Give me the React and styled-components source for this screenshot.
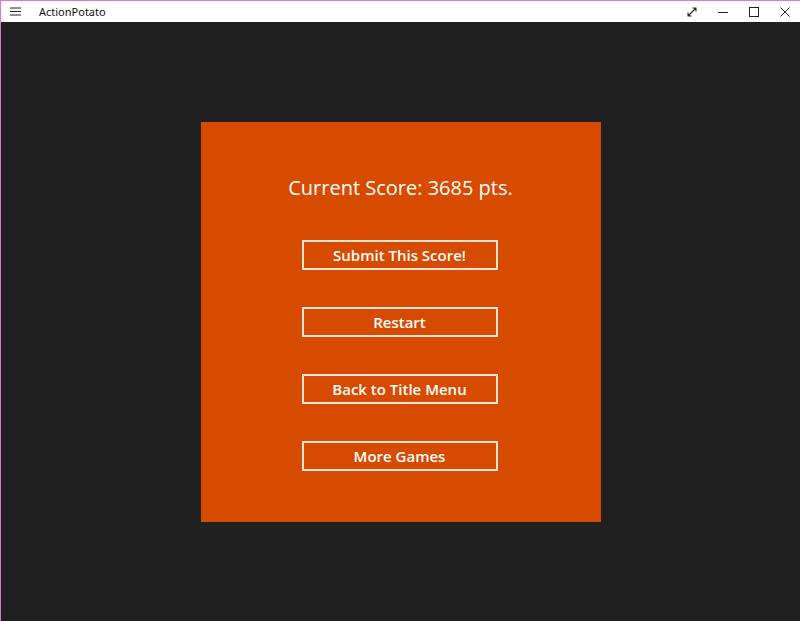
import React from "react";
import styled, { createGlobalStyle } from "styled-components";

const GlobalStyle = createGlobalStyle`
  html, body {
    margin: 0;
    padding: 0;
    background: #202020;
  }
  body {
    font-family: "Open Sans", "Noto Sans", sans-serif;
  }
`;

const Window = styled.div`
  width: 800px;
  height: 621px;
  box-sizing: border-box;
  border-left: 1px solid #e572d8;
  border-top: 1px solid #e572d8;
  display: flex;
  flex-direction: column;
  overflow: hidden;
`;

const TitleBar = styled.div`
  height: 21px;
  flex: 0 0 21px;
  background: #ffffff;
  display: flex;
  align-items: center;
`;

const MenuButton = styled.div`
  width: 29px;
  display: flex;
  justify-content: center;
`;

const AppName = styled.span`
  margin-left: 9px;
  font-family: "Noto Sans", "Open Sans", sans-serif;
  font-size: 11px;
  color: #111;
`;

const Controls = styled.div`
  margin-left: auto;
  display: flex;
  height: 100%;
`;

const Control = styled.div`
  width: 31px;
  height: 100%;
  display: flex;
  align-items: center;
  justify-content: center;
`;

const Content = styled.main`
  flex: 1;
  background: #202020;
  display: flex;
  align-items: center;
  justify-content: center;
`;

const Panel = styled.section`
  width: 400px;
  height: 400px;
  background: #d64b00;
  display: flex;
  flex-direction: column;
  align-items: center;
  padding-top: 51px;
  box-sizing: border-box;
`;

const Score = styled.h1`
  margin: 0 0 38px;
  font-weight: 400;
  font-size: 20px;
  line-height: 29px;
  color: #fff;
`;

const Menu = styled.div`
  display: flex;
  flex-direction: column;
  gap: 37px;
  margin-right: 2px;
`;

const MenuItem = styled.button`
  width: 196px;
  height: 30px;
  background: transparent;
  border: 2px solid #f6e4d8;
  color: #fff;
  font-family: "Open Sans", "Noto Sans", sans-serif;
  font-weight: 600;
  font-size: 15px;
  padding: 0;
  cursor: pointer;
`;

const items = ["Submit This Score!", "Restart", "Back to Title Menu", "More Games"];

export default function App() {
  return (
    <>
      <GlobalStyle />
      <Window>
        <TitleBar>
          <MenuButton>
            <svg width="11" height="9" viewBox="0 0 11 9">
              <path d="M0 1h11M0 4.5h11M0 8h11" stroke="#222" strokeWidth="1" />
            </svg>
          </MenuButton>
          <AppName>ActionPotato</AppName>
          <Controls>
            <Control>
              <svg width="10" height="10" viewBox="0 0 10 10">
                <path d="M1 9L9 1M5.5 1H9v3.5M1 5.5V9h3.5" stroke="#222" strokeWidth="1.1" fill="none" />
              </svg>
            </Control>
            <Control>
              <svg width="10" height="10" viewBox="0 0 10 10">
                <path d="M0 5.5h10" stroke="#222" strokeWidth="1" />
              </svg>
            </Control>
            <Control>
              <svg width="10" height="10" viewBox="0 0 10 10">
                <rect x="0.5" y="0.5" width="9" height="9" stroke="#222" strokeWidth="1" fill="none" />
              </svg>
            </Control>
            <Control>
              <svg width="10" height="10" viewBox="0 0 10 10">
                <path d="M0.5 0.5l9 9M9.5 0.5l-9 9" stroke="#222" strokeWidth="1" />
              </svg>
            </Control>
          </Controls>
        </TitleBar>
        <Content>
          <Panel>
            <Score>Current Score: 3685 pts.</Score>
            <Menu>
              {items.map((label) => (
                <MenuItem key={label}>{label}</MenuItem>
              ))}
            </Menu>
          </Panel>
        </Content>
      </Window>
    </>
  );
}
